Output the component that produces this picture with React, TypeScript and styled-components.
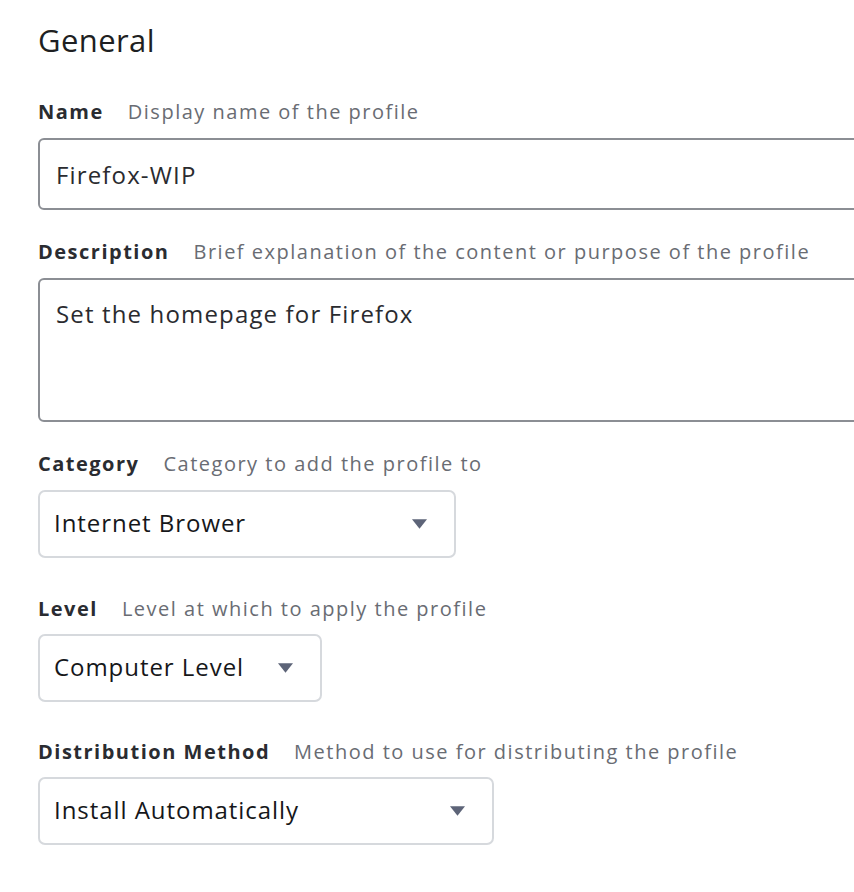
import styled, { createGlobalStyle } from "styled-components";

const GlobalStyle = createGlobalStyle`
  html, body {
    margin: 0;
    padding: 0;
    background: #ffffff;
    overflow: hidden;
  }
  body {
    font-family: "Open Sans", Lato, sans-serif;
    -webkit-font-smoothing: antialiased;
  }
`;

type SelectProps = {
  value: string;
  width: number;
};

function Select({ value, width }: SelectProps) {
  return (
    <SelectBox $width={width}>
      <SelectValue>{value}</SelectValue>
      <Caret viewBox="0 0 14 9" aria-hidden>
        <path d="M0 0 H14 L7 9 Z" fill="#5d6478" />
      </Caret>
    </SelectBox>
  );
}

export default function App() {
  return (
    <>
      <GlobalStyle />
      <Page>
        <Heading>General</Heading>

        <Field>
          <LabelRow>
            <Label>Name</Label>
            <Hint>Display name of the profile</Hint>
          </LabelRow>
          <TextInput>Firefox-WIP</TextInput>
        </Field>

        <Field>
          <LabelRow>
            <Label>Description</Label>
            <Hint>Brief explanation of the content or purpose of the profile</Hint>
          </LabelRow>
          <TextArea>Set the homepage for Firefox</TextArea>
        </Field>

        <Field $gap={39}>
          <LabelRow>
            <Label>Category</Label>
            <Hint>Category to add the profile to</Hint>
          </LabelRow>
          <Select value="Internet Brower" width={418} />
        </Field>

        <Field $gap={38} $inner={13}>
          <LabelRow>
            <Label>Level</Label>
            <Hint>Level at which to apply the profile</Hint>
          </LabelRow>
          <Select value="Computer Level" width={284} />
        </Field>

        <Field $gap={0} $inner={13}>
          <LabelRow>
            <Label>Distribution Method</Label>
            <Hint>Method to use for distributing the profile</Hint>
          </LabelRow>
          <Select value="Install Automatically" width={456} />
        </Field>
      </Page>
    </>
  );
}

const Page = styled.div`
  width: 816px;
  padding: 22px 0 0 38px;
  display: flex;
  flex-direction: column;
`;

const Heading = styled.h2`
  margin: 0 0 42px;
  font-size: 31px;
  line-height: 36px;
  font-weight: 400;
  letter-spacing: 0.4px;
  color: #1e1f22;
`;

const Field = styled.div<{ $gap?: number; $inner?: number }>`
  display: flex;
  flex-direction: column;
  gap: ${(p) => p.$inner ?? 14}px;
  margin-bottom: ${(p) => p.$gap ?? 30}px;
`;

const LabelRow = styled.div`
  display: flex;
  align-items: baseline;
  gap: 24px;
  line-height: 24px;
  white-space: nowrap;
`;

const Label = styled.span`
  font-size: 20px;
  font-weight: 700;
  color: #2a2c31;
  letter-spacing: 1.5px;
`;

const Hint = styled.span`
  font-size: 20px;
  font-weight: 400;
  color: #696c73;
  letter-spacing: 1.5px;
`;

const TextInput = styled.div`
  box-sizing: border-box;
  height: 72px;
  width: calc(100% + 20px);
  border: 2px solid #8b8e94;
  border-radius: 6px;
  padding: 0 16px;
  display: flex;
  align-items: center;
  font-size: 24px;
  letter-spacing: 1.15px;
  color: #2a2b2f;
`;

const TextArea = styled.div`
  box-sizing: border-box;
  height: 144px;
  width: calc(100% + 20px);
  border: 2px solid #8b8e94;
  border-radius: 6px;
  padding: 18px 16px;
  font-size: 24px;
  line-height: 32px;
  letter-spacing: 1.15px;
  color: #2a2b2f;
`;

const SelectBox = styled.div<{ $width: number }>`
  box-sizing: border-box;
  width: ${(p) => p.$width}px;
  height: 68px;
  border: 2px solid #d6d9dd;
  border-radius: 7px;
  padding: 0 27px 3px 14px;
  display: flex;
  align-items: center;
  justify-content: space-between;
`;

const SelectValue = styled.span`
  font-size: 24px;
  letter-spacing: 0.95px;
  color: #16171a;
`;

const Caret = styled.svg`
  width: 15px;
  height: 10px;
  flex-shrink: 0;
  margin-top: 2px;
`;
